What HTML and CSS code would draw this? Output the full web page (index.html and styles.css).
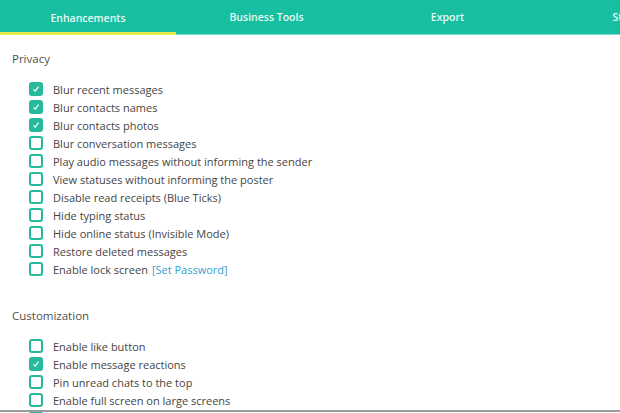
FILE: index.html
```html
<!DOCTYPE html>
<html lang="en">
<head>
    <meta charset="UTF-8">
    <meta name="viewport" content="width=device-width, initial-scale=1.0">
    <title>Settings</title>
    <link rel="stylesheet" href="styles.css">
</head>
<body>
<div class="frame">
    <div class="tabs">
        <div class="tab active">Enhancements</div>
        <div class="tab">Business Tools</div>
        <div class="tab">Export</div>
        <div class="tab">Status</div>
    </div>

    <div class="content">
        <div class="section-title">Privacy</div>
        <ul class="options">
            <li><span class="box checked"><svg viewBox="0 0 14 14"><path d="M3.5 7.4 L6 10 L10.6 3.8"/></svg></span>Blur recent messages</li>
            <li><span class="box checked"><svg viewBox="0 0 14 14"><path d="M3.5 7.4 L6 10 L10.6 3.8"/></svg></span>Blur contacts names</li>
            <li><span class="box checked"><svg viewBox="0 0 14 14"><path d="M3.5 7.4 L6 10 L10.6 3.8"/></svg></span>Blur contacts photos</li>
            <li><span class="box"></span>Blur conversation messages</li>
            <li><span class="box"></span>Play audio messages without informing the sender</li>
            <li><span class="box"></span>View statuses without informing the poster</li>
            <li><span class="box"></span>Disable read receipts (Blue Ticks)</li>
            <li><span class="box"></span>Hide typing status</li>
            <li><span class="box"></span>Hide online status (Invisible Mode)</li>
            <li><span class="box"></span>Restore deleted messages</li>
            <li><span class="box"></span>Enable lock screen <a class="link" href="#">[Set Password]</a></li>
        </ul>

        <div class="section-title second">Customization</div>
        <ul class="options">
            <li><span class="box"></span>Enable like button</li>
            <li><span class="box checked"><svg viewBox="0 0 14 14"><path d="M3.5 7.4 L6 10 L10.6 3.8"/></svg></span>Enable message reactions</li>
            <li><span class="box"></span>Pin unread chats to the top</li>
            <li><span class="box"></span>Enable full screen on large screens</li>
            <li><span class="box checked"><svg viewBox="0 0 14 14"><path d="M3.5 7.4 L6 10 L10.6 3.8"/></svg></span></li>
        </ul>
    </div>
    <div class="edge"></div>
</div>
</body>
</html>
```

FILE: styles.css
```css
*{
    box-sizing: border-box;
}
body{
    margin: 0;
    background: #ffffff;
    font-family: "Open Sans", "Noto Sans", sans-serif;
    color: #454545;
}
.frame{
    position: relative;
    width: 620px;
    height: 413px;
    overflow: hidden;
}
.tabs{
    display: flex;
    height: 35px;
    background-color: #17bfa0;
    border-bottom: 1px solid #7fdcca;
}
.tab{
    flex: 0 0 181px;
    height: 35px;
    line-height: 35px;
    text-align: center;
    font-size: 10.5px;
    font-weight: 600;
    color: #e4fbf4;
    white-space: nowrap;
}
.tab.active{
    flex-basis: 176px;
    border-bottom: 3px solid #e9ec4c;
    line-height: 36px;
}
.content{
    padding: 0 12px;
}
.section-title{
    margin-top: 15px;
    height: 18px;
    line-height: 18px;
    font-size: 11.5px;
    color: #505050;
}
.section-title.second{
    margin-top: 29px;
}
.options{
    list-style: none;
    margin: 12px 0 0 0;
    padding: 0 0 0 17px;
}
.options li{
    display: flex;
    align-items: center;
    height: 18px;
    font-size: 11px;
    white-space: nowrap;
}
.box{
    width: 14px;
    height: 14px;
    margin-right: 10px;
    border: 2px solid #26b99b;
    border-radius: 3px;
    flex-shrink: 0;
}
.box.checked{
    background-color: #26b99b;
}
.box svg{
    display: block;
    width: 10px;
    height: 10px;
}
.box svg path{
    fill: none;
    stroke: #ffffff;
    stroke-width: 1.6;
}
.link{
    margin-left: 4px;
    color: #35a2cf;
    text-decoration: none;
}
.edge{
    position: absolute;
    left: 0;
    right: 0;
    bottom: 1px;
    height: 2px;
    background-color: #9c9c9c;
}
```
